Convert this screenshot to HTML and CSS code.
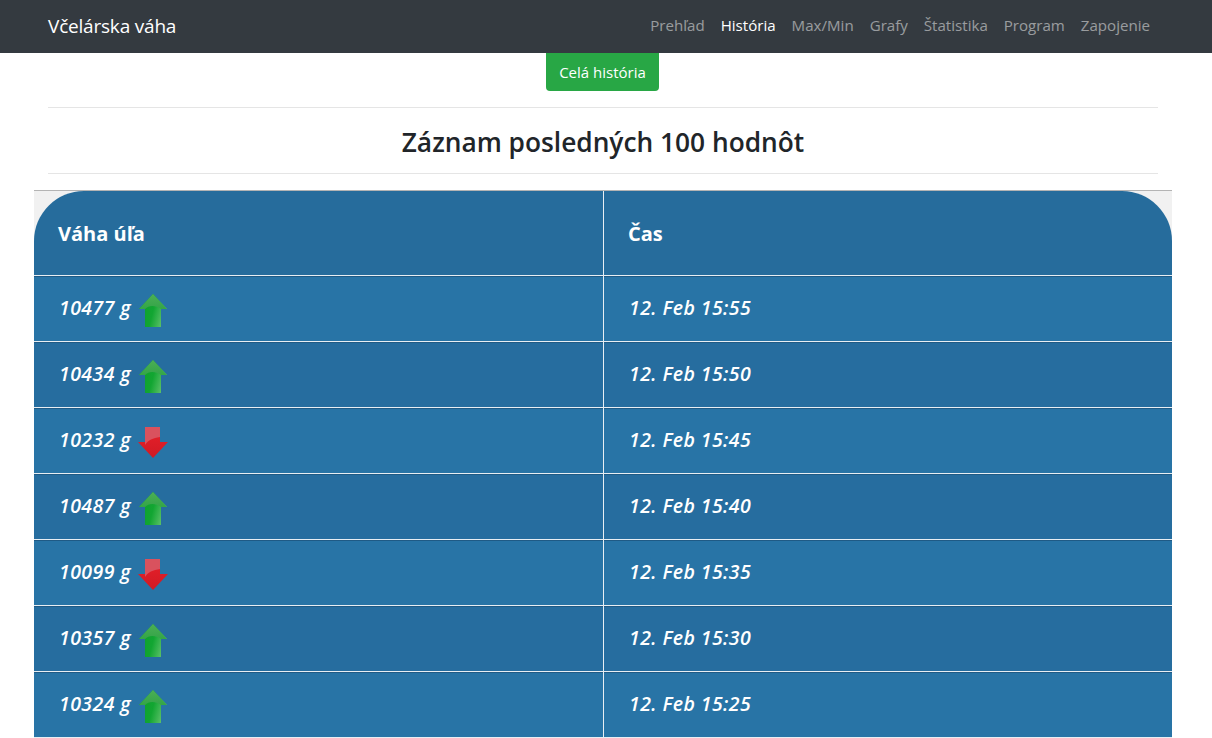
FILE: index.html
```html
<!DOCTYPE html>
<html lang="sk">
<head>
<meta charset="utf-8">
<title>Včelárska váha</title>
<link rel="stylesheet" href="styles.css">
</head>
<body>
<svg class="defs" width="0" height="0" aria-hidden="true">
  <defs>
    <linearGradient id="gs" x1="0" y1="0" x2="1" y2="0.3"><stop offset="0" stop-color="#0c9e2a"/><stop offset="0.6" stop-color="#12a632"/><stop offset="1" stop-color="#5cc068"/></linearGradient>
    <linearGradient id="gh" x1="0" y1="0" x2="0" y2="1"><stop offset="0" stop-color="#4cae55"/><stop offset="1" stop-color="#34a548"/></linearGradient>
    <linearGradient id="rs" x1="0" y1="0" x2="0" y2="1"><stop offset="0" stop-color="#e8202a"/><stop offset="1" stop-color="#d01a24"/></linearGradient>
    <symbol id="up" viewBox="0 0 28 33">
      <path d="M14 0 28 15H22V33H6V15H0Z" fill="url(#gs)"/>
      <path d="M14 0 28 15H22C16 11 10 11 6 15H0Z" fill="url(#gh)"/>
    </symbol>
    <symbol id="down" viewBox="0 0 30 31">
      <path d="M7 0H22V15H30L15 31 0 15H7Z" fill="url(#rs)"/>
      <path d="M7 0H22V10C15 11 10 13 7 18Z" fill="#d9525e"/>
    </symbol>
  </defs>
</svg>
<nav class="navbar">
  <a class="brand" href="#">Včelárska váha</a>
  <ul class="nav">
    <li><a href="#">Prehľad</a></li>
    <li><a class="active" href="#">História</a></li>
    <li><a href="#">Max/Min</a></li>
    <li><a href="#">Grafy</a></li>
    <li><a href="#">Štatistika</a></li>
    <li><a href="#">Program</a></li>
    <li><a href="#">Zapojenie</a></li>
  </ul>
</nav>
<main class="page">
  <div class="actions"><a class="btn" href="#">Celá história</a></div>
  <div class="heading"><h2>Záznam posledných 100 hodnôt</h2></div>
  <table class="data">
    <thead><tr><th>Váha úľa</th><th>Čas</th></tr></thead>
    <tbody>
      <tr><td><span class="val">10477 g</span><svg class="arrow"><use href="#up"/></svg></td><td>12. Feb 15:55</td></tr>
      <tr><td><span class="val">10434 g</span><svg class="arrow"><use href="#up"/></svg></td><td>12. Feb 15:50</td></tr>
      <tr><td><span class="val">10232 g</span><svg class="arrow down"><use href="#down"/></svg></td><td>12. Feb 15:45</td></tr>
      <tr><td><span class="val">10487 g</span><svg class="arrow"><use href="#up"/></svg></td><td>12. Feb 15:40</td></tr>
      <tr><td><span class="val">10099 g</span><svg class="arrow down"><use href="#down"/></svg></td><td>12. Feb 15:35</td></tr>
      <tr><td><span class="val">10357 g</span><svg class="arrow"><use href="#up"/></svg></td><td>12. Feb 15:30</td></tr>
      <tr><td><span class="val">10324 g</span><svg class="arrow"><use href="#up"/></svg></td><td>12. Feb 15:25</td></tr>
    </tbody>
  </table>
</main>
</body>
</html>
```
FILE: styles.css
```css
* { box-sizing: border-box; }
html, body { margin: 0; height: 738px; overflow: hidden; background: #fff; }
body { font-family: "Open Sans", "Noto Sans", sans-serif; color: #212529; }
a { text-decoration: none; }
.defs { display: block; height: 0; }

.navbar {
  height: 53px;
  width: 100%;
  padding: 0 54px 3px 48px;
  background: #343a40;
  display: flex;
  align-items: center;
  justify-content: space-between;
}
.brand { color: #fff; font-size: 19px; letter-spacing: -0.2px; padding-top: 1px; }
.nav { list-style: none; margin: 0; padding: 0; display: flex; }
.nav a { display: block; padding: 0 8px; font-size: 15.1px; color: rgba(255,255,255,.5); }
.nav a.active { color: #fff; }

.page { width: 1206px; display: flex; flex-direction: column; align-items: center; }
.actions { height: 54px; display: flex; justify-content: center; align-items: flex-start; padding-right: 1px; }
.btn {
  display: block;
  height: 38px;
  line-height: 38px;
  width: 113px;
  text-align: center;
  background: #28a745;
  color: #fff;
  font-size: 15px;
  border-radius: 0 0 4px 4px;
}
.heading {
  width: 1110px;
  height: 67px;
  padding-top: 2px;
  border-top: 1px solid #e5e5e5;
  border-bottom: 1px solid #e5e5e5;
  display: flex;
  align-items: center;
  justify-content: center;
}
h2 { margin: 0; font-size: 26.3px; font-weight: 600; }

.data {
  margin-top: 16px;
  width: 1138px;
  table-layout: fixed;
  border-collapse: separate;
  border-spacing: 0;
  background: #f1f1f1;
  border-top: 1px solid #b4b4b4;
  color: #fff;
}
.data th, .data td { padding: 0; text-align: left; vertical-align: middle; }
.data th:first-child, .data td:first-child { width: 570px; border-right: 1px solid #e8eef3; }
.data th {
  height: 85px;
  padding-left: 24px;
  font-size: 20px;
  font-weight: 700;
  background: #266c9c;
  border-bottom: 1px solid #e8eef3;
}
.data th:first-child { border-top-left-radius: 50px; }
.data th:last-child { border-top-right-radius: 50px; }
.data td {
  height: 66px;
  padding: 0 0 2px 25px;
  font-size: 19.5px;
  letter-spacing: 0.42px;
  font-style: italic;
  font-weight: 600;
  background: #2874a6;
  border-bottom: 1px solid #e8eef3;
  box-shadow: inset 0 1px 0 #1f5a85;
}
.data tr:nth-child(even) td { background: #266d9f; }
.val { vertical-align: middle; }
.arrow { width: 28px; height: 33px; margin: 6px 0 0 8px; vertical-align: middle; }
.arrow.down { width: 30px; height: 31px; margin-left: 7px; }
```
